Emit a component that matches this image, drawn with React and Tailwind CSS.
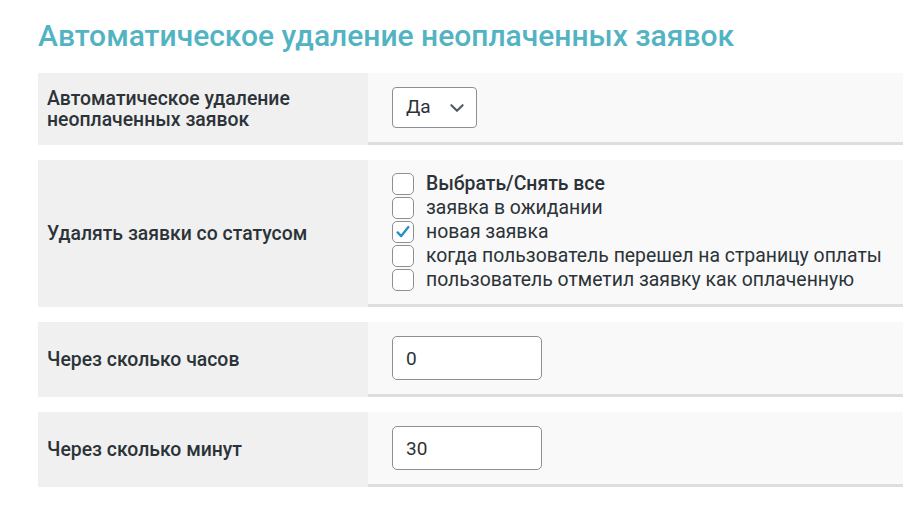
import { useState } from "react";

const statuses = [
  { label: "Выбрать/Снять все", bold: true, checked: false },
  { label: "заявка в ожидании", checked: false },
  { label: "новая заявка", checked: true },
  { label: "когда пользователь перешел на страницу оплаты", checked: false },
  { label: "пользователь отметил заявку как оплаченную", checked: false },
];

function Row({ label, height, children }) {
  return (
    <div className={`flex ${height}`}>
      <div className="w-[330px] shrink-0 bg-[#f0f0f0] flex items-center pl-[9px] pr-4 text-[19.4px] leading-[21px] font-medium text-[#2c3338]">
        {label}
      </div>
      <div className="flex-1 bg-[#f9f9f9] border-b-[3px] border-[#dedede] flex items-center pl-6">
        {children}
      </div>
    </div>
  );
}

function Checkbox({ checked }) {
  return (
    <span className="w-[22px] h-[22px] shrink-0 rounded-[5px] border border-[#8c8f94] bg-white flex items-center justify-center">
      {checked && (
        <svg width="18" height="18" viewBox="0 0 20 20">
          <path d="M4 10.5 L8 14.5 L16 4.5" fill="none" stroke="#2a8dc4" strokeWidth="2.6" strokeLinecap="round" strokeLinejoin="round" />
        </svg>
      )}
    </span>
  );
}

export default function App() {
  const [items, setItems] = useState(statuses);
  const [hours, setHours] = useState("0");
  const [minutes, setMinutes] = useState("30");

  function toggle(i) {
    setItems((prev) => prev.map((it, k) => (k === i ? { ...it, checked: !it.checked } : it)));
  }

  return (
    <div className="w-[918px] h-[512px] bg-white font-['Roboto',sans-serif] pl-[38px] pr-[15px] pt-[16px]">
      <h1 className="text-[30px] leading-[40px] font-medium text-[#52b3c2] mb-[17px]">
        Автоматическое удаление неоплаченных заявок
      </h1>

      <div className="flex flex-col gap-[15px]">
        <Row label={<span>Автоматическое удаление<br />неоплаченных заявок</span>} height="h-[72px]">
          <div className="w-[85px] h-[41px] rounded-[4px] border border-[#8c8f94] bg-white flex items-center justify-between pl-[13px] pr-[10px] text-[19px] text-[#2c3338]">
            <span>Да</span>
            <svg width="18" height="18" viewBox="0 0 16 16">
              <path d="M3 5.5 L8 10.5 L13 5.5" fill="none" stroke="#50575e" strokeWidth="1.8" strokeLinecap="round" strokeLinejoin="round" />
            </svg>
          </div>
        </Row>

        <Row label="Удалять заявки со статусом" height="h-[147px]">
          <div className="flex flex-col">
            {items.map((it, i) => (
              <label key={i} onClick={() => toggle(i)} className="flex items-center h-[24px] gap-3 cursor-pointer text-[19.4px] text-[#2c3338]">
                <Checkbox checked={it.checked} />
                <span className={it.bold ? "font-medium" : ""}>{it.label}</span>
              </label>
            ))}
          </div>
        </Row>

        <Row label="Через сколько часов" height="h-[75px]">
          <input
            value={hours}
            onChange={(e) => setHours(e.target.value)}
            className="w-[150px] h-[44px] rounded-[5px] border border-[#8c8f94] bg-white pl-[13px] text-[19px] text-[#2c3338] outline-none"
          />
        </Row>

        <Row label="Через сколько минут" height="h-[75px]">
          <input
            value={minutes}
            onChange={(e) => setMinutes(e.target.value)}
            className="w-[150px] h-[44px] rounded-[5px] border border-[#8c8f94] bg-white pl-[13px] text-[19px] text-[#2c3338] outline-none"
          />
        </Row>
      </div>
    </div>
  );
}
